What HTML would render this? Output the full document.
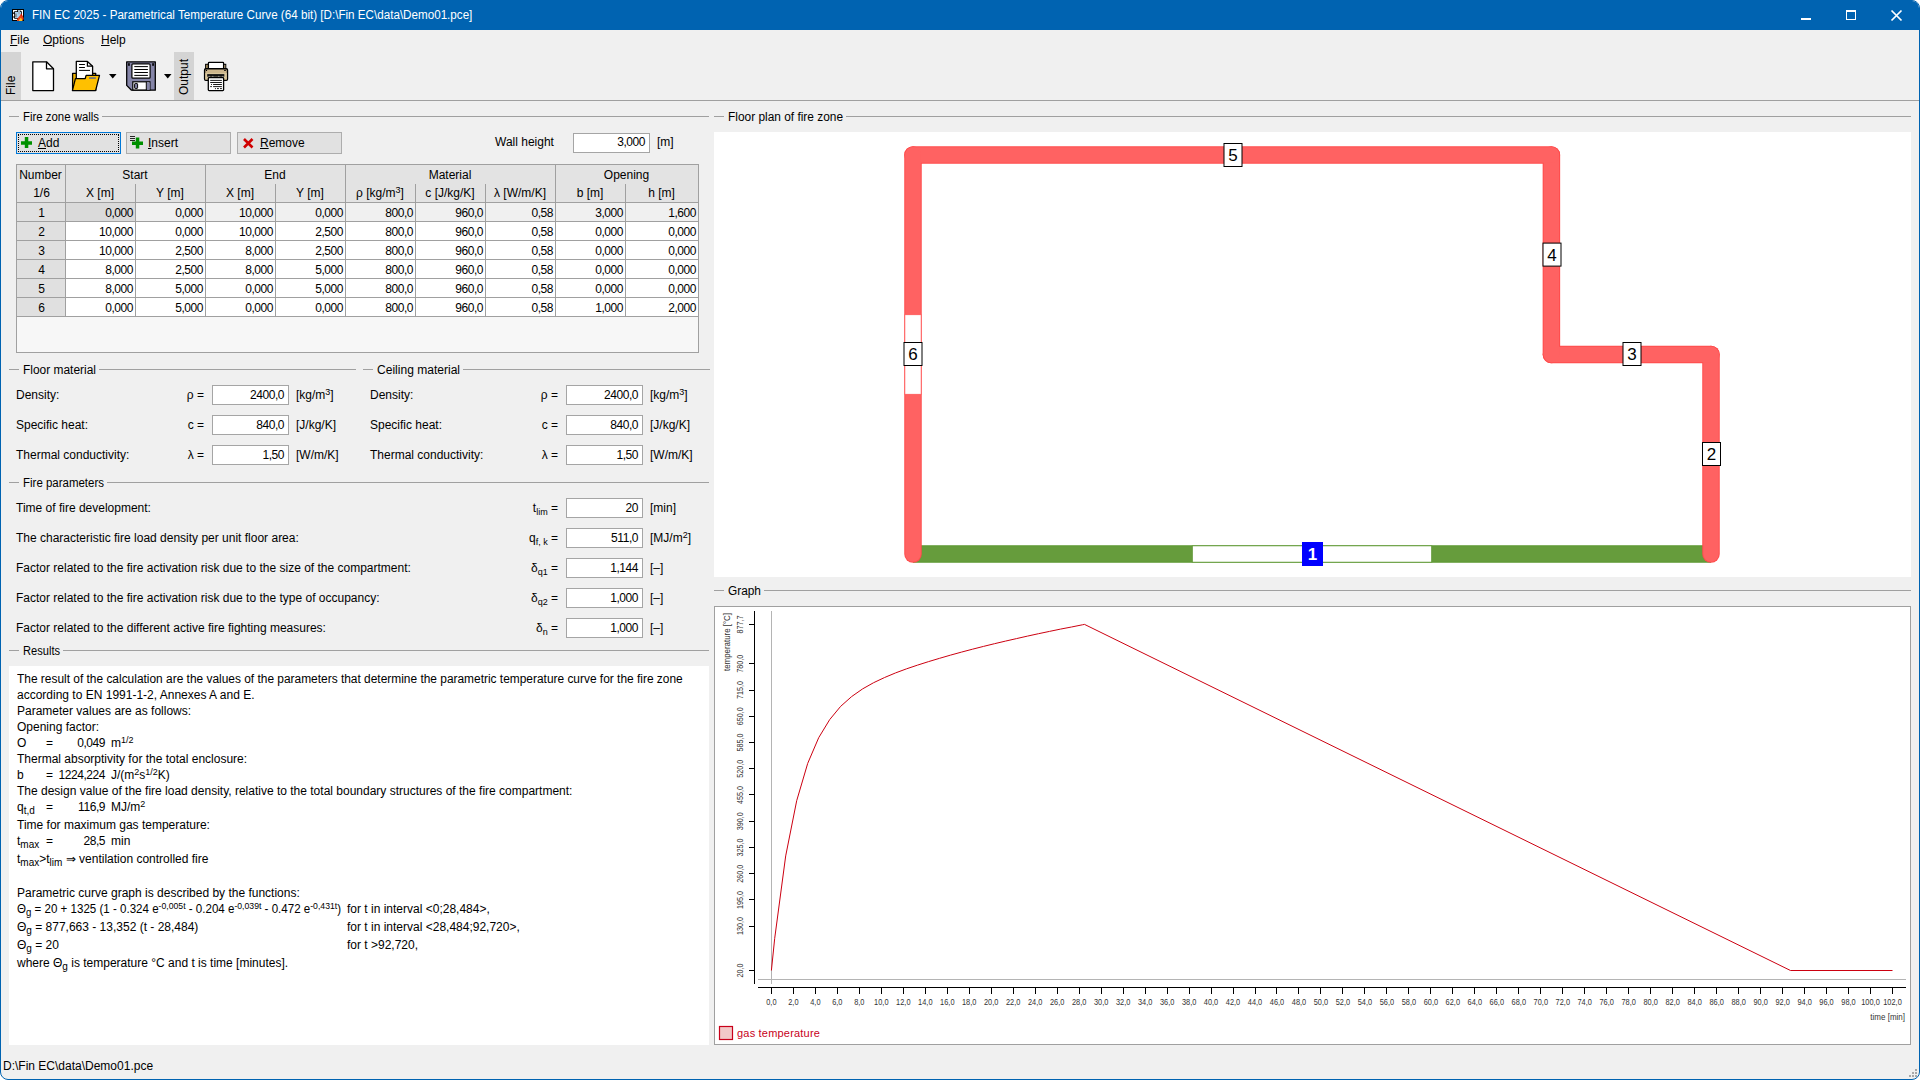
<!DOCTYPE html><html><head><meta charset="utf-8"><style>
html,body{margin:0;padding:0;width:1920px;height:1080px;overflow:hidden;background:#fff}
#win{position:absolute;left:0;top:0;width:1918px;height:1078px;border:1px solid #0063b1;border-radius:8px;background:#f0f0f0;overflow:hidden}
.t{position:absolute;font-family:"Liberation Sans",sans-serif;font-size:12px;line-height:16px;white-space:nowrap;color:#000}
.n{letter-spacing:-0.45px}
.u{text-decoration:underline}
.inp{position:absolute;background:#fff;border:1px solid #a5a5a5;box-sizing:border-box}
svg{position:absolute;overflow:visible}
</style></head><body><div id="win">
<div style="position:absolute;left:-1px;top:-1px;width:1920px;height:1080px">
<div style="position:absolute;left:0px;top:0px;width:1920px;height:30px;background:#0063b1"></div>
<svg style="left:12px;top:9px" width="12" height="12" viewBox="0 0 12 12">
<rect x="0" y="0" width="12" height="12" fill="#000"/>
<rect x="3" y="3" width="6" height="6" fill="#a9d2f2"/>
<rect x="6" y="1" width="2" height="2" fill="#a9d2f2"/>
<path d="M1.6 3.5V1.6H5.2M1.6 4.8V7.4M1.6 8.6V10.4H5.2M8.4 1.6H10.4V7" fill="none" stroke="#fff" stroke-width="1.2"/>
<rect x="3" y="4.5" width="1.8" height="3.8" fill="#8c8c8c"/>
<rect x="6.5" y="1.2" width="1" height="4" fill="#999"/>
<path d="M5 12 C4.6 10 6 8.8 7.2 7.5 C8 6.5 8.6 5.5 9 4.5 C10.2 6 11.5 7.5 11.6 9.6 C11.7 11.2 10.4 12 9.4 12Z" fill="#e8401a"/>
<path d="M7 12 C7 10.6 8 9.8 8.8 8.8 C9.8 10 10.4 10.8 10.2 12Z" fill="#ffc41a"/>
<path d="M9 4.5 C9.5 5.3 10 5.8 10.3 6.3 L9 6.8Z" fill="#c00000"/>
</svg>
<div class="t " style="left:32px;top:7px;color:#fff;transform:scaleX(0.97);transform-origin:0 0">FIN EC 2025 - Parametrical Temperature Curve (64 bit) [D:\Fin EC\data\Demo01.pce]</div>
<div style="position:absolute;left:1801px;top:18px;width:10px;height:2px;background:#fff"></div>
<div style="position:absolute;left:1846px;top:10px;width:10px;height:10px;border:1px solid #fff;border-top-width:2px;box-sizing:border-box"></div>
<svg style="left:1891px;top:10px" width="11" height="11" viewBox="0 0 11 11"><path d="M0.5 0.5L10.5 10.5M10.5 0.5L0.5 10.5" stroke="#fff" stroke-width="1.7"/></svg>
<div class="t " style="left:10px;top:32px;"><span class="u">F</span>ile</div>
<div class="t " style="left:43px;top:32px;"><span class="u">O</span>ptions</div>
<div class="t " style="left:101px;top:32px;"><span class="u">H</span>elp</div>
<div style="position:absolute;left:1px;top:52px;width:20px;height:48px;background:#d4d4d4"></div>
<div class="t" style="left:-13px;top:68px;width:48px;box-sizing:border-box;padding-left:5px;text-align:left;transform:rotate(-90deg);transform-origin:24px 8px">File</div>
<div style="position:absolute;left:174px;top:52px;width:20px;height:48px;background:#d4d4d4"></div>
<div class="t" style="left:160px;top:68px;width:48px;box-sizing:border-box;padding-left:5px;text-align:left;transform:rotate(-90deg);transform-origin:24px 8px">Output</div>
<div style="position:absolute;left:0px;top:100px;width:1920px;height:1px;background:#a0a0a0"></div>
<svg style="left:32px;top:61px" width="23" height="31" viewBox="0 0 23 31">
<path d="M0.8 0.8 H14.5 L21.5 7.8 V29.6 H0.8 Z" fill="#fff" stroke="#000" stroke-width="1.3" stroke-linejoin="round"/>
<path d="M14.5 0.8 V7.8 H21.5" fill="none" stroke="#000" stroke-width="1.3" stroke-linejoin="round"/>
</svg>
<svg style="left:68px;top:56px" width="34" height="38" viewBox="0 0 34 38">
<path d="M4.6 17.3 H27.7 V34.4 H4.6 Z" fill="#f0b400" stroke="#000" stroke-width="1.3" stroke-linejoin="round"/>
<path d="M8.3 22 V5.4 H19.4 L24.6 10.2 V22" fill="#fff" stroke="#000" stroke-width="1.3" stroke-linejoin="round"/>
<path d="M19.4 5.4 V10.2 H24.6" fill="none" stroke="#000" stroke-width="1.2"/>
<path d="M11.1 8.5H16.9M11.1 11.5H16.9M11.1 14.4H22" stroke="#000" stroke-width="1"/>
<path d="M7.4 22.6 H17.2 L18.1 19.4 H31.5 L27.6 34.6 H4.4 Z" fill="#ffc000" stroke="#000" stroke-width="1.3" stroke-linejoin="round"/>
<rect x="21.1" y="21.3" width="6.7" height="1.5" fill="#5a6890"/>
</svg>
<svg style="left:109px;top:74px" width="8" height="5" viewBox="0 0 8 5"><path d="M0 0H7.5L3.75 4.5Z" fill="#000"/></svg>
<svg style="left:122px;top:56px" width="38" height="40" viewBox="0 0 38 40">
<path d="M4.7 5.8 H33.3 V34.2 H9.5 L4.7 29.4 Z" fill="#8585a8" stroke="#000" stroke-width="1.3" stroke-linejoin="round"/>
<rect x="6.1" y="7.2" width="1.7" height="2.6" fill="#000"/><rect x="30.2" y="7.2" width="1.7" height="2.6" fill="#000"/>
<rect x="9.9" y="7.8" width="18.2" height="14.4" rx="1" fill="#fff" stroke="#000" stroke-width="1.2"/>
<path d="M12.3 10.6H25.9M12.3 13.5H25.9M12.3 16.5H25.9M12.3 19.4H25.9" stroke="#000" stroke-width="1"/>
<rect x="10.8" y="25.8" width="17.1" height="8.2" fill="#fff" stroke="#000" stroke-width="1.2"/>
<rect x="24.6" y="26.4" width="3.2" height="7.4" fill="#8585a8"/>
<path d="M24.3 25.8V34" stroke="#000" stroke-width="1"/>
<rect x="12.6" y="27.6" width="3" height="4.8" rx="0.6" fill="#8585a8" stroke="#000" stroke-width="1"/>
</svg>
<svg style="left:164px;top:74px" width="8" height="5" viewBox="0 0 8 5"><path d="M0 0H7.5L3.75 4.5Z" fill="#000"/></svg>
<svg style="left:200px;top:56px" width="32" height="40" viewBox="0 0 32 40">
<rect x="5.6" y="8.3" width="2.9" height="4.5" fill="#a89060" stroke="#000" stroke-width="1"/>
<rect x="23.6" y="8.3" width="2.2" height="4.5" fill="#d6c08f" stroke="#000" stroke-width="1"/>
<rect x="8.4" y="6.4" width="15.2" height="7" rx="0.8" fill="#fff" stroke="#000" stroke-width="1.3"/>
<rect x="4.6" y="12.7" width="22.9" height="11.6" rx="1.2" fill="#cdb68c" stroke="#000" stroke-width="1.4"/>
<rect x="5.3" y="17" width="21.5" height="6.6" fill="#d8c59b"/>
<circle cx="6.5" cy="14.4" r="0.7" fill="#000"/><path d="M24.1 14.4H25.9" stroke="#000" stroke-width="1"/>
<rect x="7.2" y="18.1" width="17.1" height="2.6" fill="#111"/>
<path d="M8.5 20.4h1.5M12 20.4h1.5M18 20.4h1.5M22 20.4h1.5" stroke="#999" stroke-width="0.8"/>
<rect x="8.3" y="21.6" width="15.3" height="13" rx="0.8" fill="#fff" stroke="#000" stroke-width="1.3"/>
<path d="M10.2 24.4H21.9M10.2 26.5H21.9M13.1 28.5H21.9M13.1 30.6H21.9M10.2 30.6H11.9M17 32.6H18.9M20 32.6H21.9" stroke="#000" stroke-width="0.9"/>
<circle cx="11.5" cy="28.5" r="0.55" fill="#000"/><circle cx="15.4" cy="32.6" r="0.55" fill="#000"/>
</svg>
<div style="position:absolute;left:9px;top:116px;width:10px;height:1px;background:#a0a0a0"></div>
<div style="position:absolute;left:102px;top:116px;width:607px;height:1px;background:#a0a0a0"></div>
<div class="t " style="left:23px;top:109px;transform:scaleX(0.950);transform-origin:0 0">Fire zone walls</div>
<div style="position:absolute;left:16px;top:132px;width:105px;height:22px;background:#e1e1e1;border:1px solid #0078d7;box-sizing:border-box"></div>
<div style="position:absolute;left:18px;top:134px;width:101px;height:18px;border:1px dotted #000;box-sizing:border-box"></div>
<svg style="left:21px;top:137px" width="12" height="12" viewBox="0 0 12 12"><path d="M0 4.2H11V7.7H0Z M3.8 0H7.3V11H3.8Z" fill="#009000"/></svg>
<div class="t " style="left:38px;top:135px;"><span class="u">A</span>dd</div>
<div style="position:absolute;left:126px;top:132px;width:105px;height:22px;background:#e1e1e1;border:1px solid #adadad;box-sizing:border-box"></div>
<svg style="left:130px;top:135px" width="15" height="15" viewBox="0 0 15 15"><path d="M0 1.5H5M0 3.5H5M0 5.5H5" stroke="#111" stroke-width="0.9"/><path d="M2 6.5H13V10H2Z M5.8 2.5H9.3V13.5H5.8Z" fill="#009000"/></svg>
<div class="t " style="left:148px;top:135px;"><span class="u">I</span>nsert</div>
<div style="position:absolute;left:237px;top:132px;width:105px;height:22px;background:#e1e1e1;border:1px solid #adadad;box-sizing:border-box"></div>
<svg style="left:243px;top:138px" width="11" height="11" viewBox="0 0 11 11"><path d="M1 1L9.5 9.5M9.5 1L1 9.5" stroke="#d00000" stroke-width="2.6"/></svg>
<div class="t " style="left:260px;top:135px;"><span class="u">R</span>emove</div>
<div class="t " style="left:495px;top:134px;">Wall height</div>
<div class="inp" style="left:573px;top:133px;width:77px;height:20px"></div>
<div class="t n" style="right:1275px;top:134px;text-align:right;">3,000</div>
<div class="t " style="left:657px;top:134px;">[m]</div>
<div style="position:absolute;left:16px;top:164px;width:683px;height:189px;background:#f7f7f7;border:1px solid #a0a0a0;box-sizing:border-box"></div>
<div style="position:absolute;left:17px;top:165px;width:681px;height:37px;background:#e3e3e3"></div>
<div style="position:absolute;left:17px;top:203px;width:48px;height:18px;background:#e0e0e0"></div>
<div style="position:absolute;left:66px;top:203px;width:69px;height:18px;background:#dadada"></div>
<div style="position:absolute;left:136px;top:203px;width:69px;height:18px;background:#f0f0f0"></div>
<div style="position:absolute;left:206px;top:203px;width:69px;height:18px;background:#f0f0f0"></div>
<div style="position:absolute;left:276px;top:203px;width:69px;height:18px;background:#f0f0f0"></div>
<div style="position:absolute;left:346px;top:203px;width:69px;height:18px;background:#f0f0f0"></div>
<div style="position:absolute;left:416px;top:203px;width:69px;height:18px;background:#f0f0f0"></div>
<div style="position:absolute;left:486px;top:203px;width:69px;height:18px;background:#f0f0f0"></div>
<div style="position:absolute;left:556px;top:203px;width:69px;height:18px;background:#f0f0f0"></div>
<div style="position:absolute;left:626px;top:203px;width:72px;height:18px;background:#f0f0f0"></div>
<div style="position:absolute;left:17px;top:222px;width:48px;height:18px;background:#e0e0e0"></div>
<div style="position:absolute;left:66px;top:222px;width:69px;height:18px;background:#fff"></div>
<div style="position:absolute;left:136px;top:222px;width:69px;height:18px;background:#fff"></div>
<div style="position:absolute;left:206px;top:222px;width:69px;height:18px;background:#fff"></div>
<div style="position:absolute;left:276px;top:222px;width:69px;height:18px;background:#fff"></div>
<div style="position:absolute;left:346px;top:222px;width:69px;height:18px;background:#fff"></div>
<div style="position:absolute;left:416px;top:222px;width:69px;height:18px;background:#fff"></div>
<div style="position:absolute;left:486px;top:222px;width:69px;height:18px;background:#fff"></div>
<div style="position:absolute;left:556px;top:222px;width:69px;height:18px;background:#fff"></div>
<div style="position:absolute;left:626px;top:222px;width:72px;height:18px;background:#fff"></div>
<div style="position:absolute;left:17px;top:241px;width:48px;height:18px;background:#e0e0e0"></div>
<div style="position:absolute;left:66px;top:241px;width:69px;height:18px;background:#fff"></div>
<div style="position:absolute;left:136px;top:241px;width:69px;height:18px;background:#fff"></div>
<div style="position:absolute;left:206px;top:241px;width:69px;height:18px;background:#fff"></div>
<div style="position:absolute;left:276px;top:241px;width:69px;height:18px;background:#fff"></div>
<div style="position:absolute;left:346px;top:241px;width:69px;height:18px;background:#fff"></div>
<div style="position:absolute;left:416px;top:241px;width:69px;height:18px;background:#fff"></div>
<div style="position:absolute;left:486px;top:241px;width:69px;height:18px;background:#fff"></div>
<div style="position:absolute;left:556px;top:241px;width:69px;height:18px;background:#fff"></div>
<div style="position:absolute;left:626px;top:241px;width:72px;height:18px;background:#fff"></div>
<div style="position:absolute;left:17px;top:260px;width:48px;height:18px;background:#e0e0e0"></div>
<div style="position:absolute;left:66px;top:260px;width:69px;height:18px;background:#fff"></div>
<div style="position:absolute;left:136px;top:260px;width:69px;height:18px;background:#fff"></div>
<div style="position:absolute;left:206px;top:260px;width:69px;height:18px;background:#fff"></div>
<div style="position:absolute;left:276px;top:260px;width:69px;height:18px;background:#fff"></div>
<div style="position:absolute;left:346px;top:260px;width:69px;height:18px;background:#fff"></div>
<div style="position:absolute;left:416px;top:260px;width:69px;height:18px;background:#fff"></div>
<div style="position:absolute;left:486px;top:260px;width:69px;height:18px;background:#fff"></div>
<div style="position:absolute;left:556px;top:260px;width:69px;height:18px;background:#fff"></div>
<div style="position:absolute;left:626px;top:260px;width:72px;height:18px;background:#fff"></div>
<div style="position:absolute;left:17px;top:279px;width:48px;height:18px;background:#e0e0e0"></div>
<div style="position:absolute;left:66px;top:279px;width:69px;height:18px;background:#fff"></div>
<div style="position:absolute;left:136px;top:279px;width:69px;height:18px;background:#fff"></div>
<div style="position:absolute;left:206px;top:279px;width:69px;height:18px;background:#fff"></div>
<div style="position:absolute;left:276px;top:279px;width:69px;height:18px;background:#fff"></div>
<div style="position:absolute;left:346px;top:279px;width:69px;height:18px;background:#fff"></div>
<div style="position:absolute;left:416px;top:279px;width:69px;height:18px;background:#fff"></div>
<div style="position:absolute;left:486px;top:279px;width:69px;height:18px;background:#fff"></div>
<div style="position:absolute;left:556px;top:279px;width:69px;height:18px;background:#fff"></div>
<div style="position:absolute;left:626px;top:279px;width:72px;height:18px;background:#fff"></div>
<div style="position:absolute;left:17px;top:298px;width:48px;height:18px;background:#e0e0e0"></div>
<div style="position:absolute;left:66px;top:298px;width:69px;height:18px;background:#fff"></div>
<div style="position:absolute;left:136px;top:298px;width:69px;height:18px;background:#fff"></div>
<div style="position:absolute;left:206px;top:298px;width:69px;height:18px;background:#fff"></div>
<div style="position:absolute;left:276px;top:298px;width:69px;height:18px;background:#fff"></div>
<div style="position:absolute;left:346px;top:298px;width:69px;height:18px;background:#fff"></div>
<div style="position:absolute;left:416px;top:298px;width:69px;height:18px;background:#fff"></div>
<div style="position:absolute;left:486px;top:298px;width:69px;height:18px;background:#fff"></div>
<div style="position:absolute;left:556px;top:298px;width:69px;height:18px;background:#fff"></div>
<div style="position:absolute;left:626px;top:298px;width:72px;height:18px;background:#fff"></div>
<div style="position:absolute;left:65px;top:165px;width:1px;height:151px;background:#a0a0a0"></div>
<div style="position:absolute;left:135px;top:184px;width:1px;height:132px;background:#a0a0a0"></div>
<div style="position:absolute;left:205px;top:165px;width:1px;height:151px;background:#a0a0a0"></div>
<div style="position:absolute;left:275px;top:184px;width:1px;height:132px;background:#a0a0a0"></div>
<div style="position:absolute;left:345px;top:165px;width:1px;height:151px;background:#a0a0a0"></div>
<div style="position:absolute;left:415px;top:184px;width:1px;height:132px;background:#a0a0a0"></div>
<div style="position:absolute;left:485px;top:184px;width:1px;height:132px;background:#a0a0a0"></div>
<div style="position:absolute;left:555px;top:165px;width:1px;height:151px;background:#a0a0a0"></div>
<div style="position:absolute;left:625px;top:184px;width:1px;height:132px;background:#a0a0a0"></div>
<div style="position:absolute;left:17px;top:202px;width:681px;height:1px;background:#a0a0a0"></div>
<div style="position:absolute;left:17px;top:221px;width:681px;height:1px;background:#a0a0a0"></div>
<div style="position:absolute;left:17px;top:240px;width:681px;height:1px;background:#a0a0a0"></div>
<div style="position:absolute;left:17px;top:259px;width:681px;height:1px;background:#a0a0a0"></div>
<div style="position:absolute;left:17px;top:278px;width:681px;height:1px;background:#a0a0a0"></div>
<div style="position:absolute;left:17px;top:297px;width:681px;height:1px;background:#a0a0a0"></div>
<div style="position:absolute;left:17px;top:316px;width:681px;height:1px;background:#a0a0a0"></div>
<div class="t" style="left:16px;width:49px;top:167px;text-align:center">Number</div>
<div class="t" style="left:17px;width:49px;top:185px;text-align:center">1/6</div>
<div class="t" style="left:65px;width:140px;top:167px;text-align:center">Start</div>
<div class="t" style="left:205px;width:140px;top:167px;text-align:center">End</div>
<div class="t" style="left:345px;width:210px;top:167px;text-align:center">Material</div>
<div class="t" style="left:555px;width:143px;top:167px;text-align:center">Opening</div>
<div class="t" style="left:65px;width:70px;top:185px;text-align:center">X [m]</div>
<div class="t" style="left:135px;width:70px;top:185px;text-align:center">Y [m]</div>
<div class="t" style="left:205px;width:70px;top:185px;text-align:center">X [m]</div>
<div class="t" style="left:275px;width:70px;top:185px;text-align:center">Y [m]</div>
<div class="t" style="left:345px;width:70px;top:185px;text-align:center">ρ [kg/m<sup style="font-size:9px;vertical-align:4px;line-height:0">3</sup>]</div>
<div class="t" style="left:415px;width:70px;top:185px;text-align:center">c [J/kg/K]</div>
<div class="t" style="left:485px;width:70px;top:185px;text-align:center">λ [W/m/K]</div>
<div class="t" style="left:555px;width:70px;top:185px;text-align:center">b [m]</div>
<div class="t" style="left:625px;width:73px;top:185px;text-align:center">h [m]</div>
<div class="t" style="left:17px;width:49px;top:205px;text-align:center">1</div>
<div class="t n" style="right:1787px;top:205px;text-align:right;">0,000</div>
<div class="t n" style="right:1717px;top:205px;text-align:right;">0,000</div>
<div class="t n" style="right:1647px;top:205px;text-align:right;">10,000</div>
<div class="t n" style="right:1577px;top:205px;text-align:right;">0,000</div>
<div class="t n" style="right:1507px;top:205px;text-align:right;">800,0</div>
<div class="t n" style="right:1437px;top:205px;text-align:right;">960,0</div>
<div class="t n" style="right:1367px;top:205px;text-align:right;">0,58</div>
<div class="t n" style="right:1297px;top:205px;text-align:right;">3,000</div>
<div class="t n" style="right:1224px;top:205px;text-align:right;">1,600</div>
<div class="t" style="left:17px;width:49px;top:224px;text-align:center">2</div>
<div class="t n" style="right:1787px;top:224px;text-align:right;">10,000</div>
<div class="t n" style="right:1717px;top:224px;text-align:right;">0,000</div>
<div class="t n" style="right:1647px;top:224px;text-align:right;">10,000</div>
<div class="t n" style="right:1577px;top:224px;text-align:right;">2,500</div>
<div class="t n" style="right:1507px;top:224px;text-align:right;">800,0</div>
<div class="t n" style="right:1437px;top:224px;text-align:right;">960,0</div>
<div class="t n" style="right:1367px;top:224px;text-align:right;">0,58</div>
<div class="t n" style="right:1297px;top:224px;text-align:right;">0,000</div>
<div class="t n" style="right:1224px;top:224px;text-align:right;">0,000</div>
<div class="t" style="left:17px;width:49px;top:243px;text-align:center">3</div>
<div class="t n" style="right:1787px;top:243px;text-align:right;">10,000</div>
<div class="t n" style="right:1717px;top:243px;text-align:right;">2,500</div>
<div class="t n" style="right:1647px;top:243px;text-align:right;">8,000</div>
<div class="t n" style="right:1577px;top:243px;text-align:right;">2,500</div>
<div class="t n" style="right:1507px;top:243px;text-align:right;">800,0</div>
<div class="t n" style="right:1437px;top:243px;text-align:right;">960,0</div>
<div class="t n" style="right:1367px;top:243px;text-align:right;">0,58</div>
<div class="t n" style="right:1297px;top:243px;text-align:right;">0,000</div>
<div class="t n" style="right:1224px;top:243px;text-align:right;">0,000</div>
<div class="t" style="left:17px;width:49px;top:262px;text-align:center">4</div>
<div class="t n" style="right:1787px;top:262px;text-align:right;">8,000</div>
<div class="t n" style="right:1717px;top:262px;text-align:right;">2,500</div>
<div class="t n" style="right:1647px;top:262px;text-align:right;">8,000</div>
<div class="t n" style="right:1577px;top:262px;text-align:right;">5,000</div>
<div class="t n" style="right:1507px;top:262px;text-align:right;">800,0</div>
<div class="t n" style="right:1437px;top:262px;text-align:right;">960,0</div>
<div class="t n" style="right:1367px;top:262px;text-align:right;">0,58</div>
<div class="t n" style="right:1297px;top:262px;text-align:right;">0,000</div>
<div class="t n" style="right:1224px;top:262px;text-align:right;">0,000</div>
<div class="t" style="left:17px;width:49px;top:281px;text-align:center">5</div>
<div class="t n" style="right:1787px;top:281px;text-align:right;">8,000</div>
<div class="t n" style="right:1717px;top:281px;text-align:right;">5,000</div>
<div class="t n" style="right:1647px;top:281px;text-align:right;">0,000</div>
<div class="t n" style="right:1577px;top:281px;text-align:right;">5,000</div>
<div class="t n" style="right:1507px;top:281px;text-align:right;">800,0</div>
<div class="t n" style="right:1437px;top:281px;text-align:right;">960,0</div>
<div class="t n" style="right:1367px;top:281px;text-align:right;">0,58</div>
<div class="t n" style="right:1297px;top:281px;text-align:right;">0,000</div>
<div class="t n" style="right:1224px;top:281px;text-align:right;">0,000</div>
<div class="t" style="left:17px;width:49px;top:300px;text-align:center">6</div>
<div class="t n" style="right:1787px;top:300px;text-align:right;">0,000</div>
<div class="t n" style="right:1717px;top:300px;text-align:right;">5,000</div>
<div class="t n" style="right:1647px;top:300px;text-align:right;">0,000</div>
<div class="t n" style="right:1577px;top:300px;text-align:right;">0,000</div>
<div class="t n" style="right:1507px;top:300px;text-align:right;">800,0</div>
<div class="t n" style="right:1437px;top:300px;text-align:right;">960,0</div>
<div class="t n" style="right:1367px;top:300px;text-align:right;">0,58</div>
<div class="t n" style="right:1297px;top:300px;text-align:right;">1,000</div>
<div class="t n" style="right:1224px;top:300px;text-align:right;">2,000</div>
<div style="position:absolute;left:9px;top:369px;width:10px;height:1px;background:#a0a0a0"></div>
<div style="position:absolute;left:99px;top:369px;width:257px;height:1px;background:#a0a0a0"></div>
<div class="t " style="left:23px;top:362px;transform:scaleX(0.995);transform-origin:0 0">Floor material</div>
<div style="position:absolute;left:363px;top:369px;width:10px;height:1px;background:#a0a0a0"></div>
<div style="position:absolute;left:463px;top:369px;width:247px;height:1px;background:#a0a0a0"></div>
<div class="t " style="left:377px;top:362px;transform:scaleX(1.004);transform-origin:0 0">Ceiling material</div>
<div class="t " style="left:16px;top:387px;">Density:</div>
<div class="t " style="right:1716px;top:387px;text-align:right;">ρ =</div>
<div class="inp" style="left:212px;top:385px;width:77px;height:20px"></div>
<div class="t n" style="right:1636px;top:387px;text-align:right;">2400,0</div>
<div class="t " style="left:296px;top:387px;">[kg/m<sup style="font-size:9px;vertical-align:4px;line-height:0">3</sup>]</div>
<div class="t " style="left:370px;top:387px;">Density:</div>
<div class="t " style="right:1362px;top:387px;text-align:right;">ρ =</div>
<div class="inp" style="left:566px;top:385px;width:77px;height:20px"></div>
<div class="t n" style="right:1282px;top:387px;text-align:right;">2400,0</div>
<div class="t " style="left:650px;top:387px;">[kg/m<sup style="font-size:9px;vertical-align:4px;line-height:0">3</sup>]</div>
<div class="t " style="left:16px;top:417px;">Specific heat:</div>
<div class="t " style="right:1716px;top:417px;text-align:right;">c =</div>
<div class="inp" style="left:212px;top:415px;width:77px;height:20px"></div>
<div class="t n" style="right:1636px;top:417px;text-align:right;">840,0</div>
<div class="t " style="left:296px;top:417px;">[J/kg/K]</div>
<div class="t " style="left:370px;top:417px;">Specific heat:</div>
<div class="t " style="right:1362px;top:417px;text-align:right;">c =</div>
<div class="inp" style="left:566px;top:415px;width:77px;height:20px"></div>
<div class="t n" style="right:1282px;top:417px;text-align:right;">840,0</div>
<div class="t " style="left:650px;top:417px;">[J/kg/K]</div>
<div class="t " style="left:16px;top:447px;">Thermal conductivity:</div>
<div class="t " style="right:1716px;top:447px;text-align:right;">λ =</div>
<div class="inp" style="left:212px;top:445px;width:77px;height:20px"></div>
<div class="t n" style="right:1636px;top:447px;text-align:right;">1,50</div>
<div class="t " style="left:296px;top:447px;">[W/m/K]</div>
<div class="t " style="left:370px;top:447px;">Thermal conductivity:</div>
<div class="t " style="right:1362px;top:447px;text-align:right;">λ =</div>
<div class="inp" style="left:566px;top:445px;width:77px;height:20px"></div>
<div class="t n" style="right:1282px;top:447px;text-align:right;">1,50</div>
<div class="t " style="left:650px;top:447px;">[W/m/K]</div>
<div style="position:absolute;left:9px;top:482px;width:10px;height:1px;background:#a0a0a0"></div>
<div style="position:absolute;left:107px;top:482px;width:602px;height:1px;background:#a0a0a0"></div>
<div class="t " style="left:23px;top:475px;transform:scaleX(0.956);transform-origin:0 0">Fire parameters</div>
<div class="t " style="left:16px;top:500px;">Time of fire development:</div>
<div class="t " style="right:1362px;top:500px;text-align:right;">t<sub style="font-size:9px;vertical-align:-3px;line-height:0">lim</sub> =</div>
<div class="inp" style="left:566px;top:498px;width:77px;height:20px"></div>
<div class="t n" style="right:1282px;top:500px;text-align:right;">20</div>
<div class="t " style="left:650px;top:500px;">[min]</div>
<div class="t " style="left:16px;top:530px;">The characteristic fire load density per unit floor area:</div>
<div class="t " style="right:1362px;top:530px;text-align:right;">q<sub style="font-size:9px;vertical-align:-3px;line-height:0">f, k</sub> =</div>
<div class="inp" style="left:566px;top:528px;width:77px;height:20px"></div>
<div class="t n" style="right:1282px;top:530px;text-align:right;">511,0</div>
<div class="t " style="left:650px;top:530px;">[MJ/m<sup style="font-size:9px;vertical-align:4px;line-height:0">2</sup>]</div>
<div class="t " style="left:16px;top:560px;">Factor related to the fire activation risk due to the size of the compartment:</div>
<div class="t " style="right:1362px;top:560px;text-align:right;">δ<sub style="font-size:9px;vertical-align:-3px;line-height:0">q1</sub> =</div>
<div class="inp" style="left:566px;top:558px;width:77px;height:20px"></div>
<div class="t n" style="right:1282px;top:560px;text-align:right;">1,144</div>
<div class="t " style="left:650px;top:560px;">[–]</div>
<div class="t " style="left:16px;top:590px;">Factor related to the fire activation risk due to the type of occupancy:</div>
<div class="t " style="right:1362px;top:590px;text-align:right;">δ<sub style="font-size:9px;vertical-align:-3px;line-height:0">q2</sub> =</div>
<div class="inp" style="left:566px;top:588px;width:77px;height:20px"></div>
<div class="t n" style="right:1282px;top:590px;text-align:right;">1,000</div>
<div class="t " style="left:650px;top:590px;">[–]</div>
<div class="t " style="left:16px;top:620px;">Factor related to the different active fire fighting measures:</div>
<div class="t " style="right:1362px;top:620px;text-align:right;">δ<sub style="font-size:9px;vertical-align:-3px;line-height:0">n</sub> =</div>
<div class="inp" style="left:566px;top:618px;width:77px;height:20px"></div>
<div class="t n" style="right:1282px;top:620px;text-align:right;">1,000</div>
<div class="t " style="left:650px;top:620px;">[–]</div>
<div style="position:absolute;left:9px;top:650px;width:10px;height:1px;background:#a0a0a0"></div>
<div style="position:absolute;left:63px;top:650px;width:646px;height:1px;background:#a0a0a0"></div>
<div class="t " style="left:23px;top:643px;transform:scaleX(0.925);transform-origin:0 0">Results</div>
<div style="position:absolute;left:9px;top:666px;width:700px;height:379px;background:#fff"></div>
<div class="t " style="left:17px;top:671px;transform:scaleX(0.993);transform-origin:0 0">The result of the calculation are the values of the parameters that determine the parametric temperature curve for the fire zone</div>
<div class="t " style="left:17px;top:687px;">according to EN 1991-1-2, Annexes A and E.</div>
<div class="t " style="left:17px;top:703px;">Parameter values are as follows:</div>
<div class="t " style="left:17px;top:719px;">Opening factor:</div>
<div class="t " style="left:17px;top:751px;">Thermal absorptivity for the total enclosure:</div>
<div class="t " style="left:17px;top:783px;">The design value of the fire load density, relative to the total boundary structures of the fire compartment:</div>
<div class="t " style="left:17px;top:817px;">Time for maximum gas temperature:</div>
<div class="t " style="left:17px;top:851px;">t<sub style="font-size:10px;vertical-align:-3px;line-height:0">max</sub>&gt;t<sub style="font-size:10px;vertical-align:-3px;line-height:0">lim</sub> ⇒ ventilation controlled fire</div>
<div class="t " style="left:17px;top:885px;">Parametric curve graph is described by the functions:</div>
<div class="t " style="left:17px;top:901px;transform:scaleX(0.963);transform-origin:0 0">Θ<sub style="font-size:10px;vertical-align:-3px;line-height:0">g</sub> = 20 + 1325 (1 - 0.324 e<sup style="font-size:9px;vertical-align:4px;line-height:0">-0,005t</sup> - 0.204 e<sup style="font-size:9px;vertical-align:4px;line-height:0">-0,039t</sup> - 0.472 e<sup style="font-size:9px;vertical-align:4px;line-height:0">-0,431t</sup>)</div>
<div class="t " style="left:17px;top:919px;">Θ<sub style="font-size:10px;vertical-align:-3px;line-height:0">g</sub> = 877,663 - 13,352 (t - 28,484)</div>
<div class="t " style="left:17px;top:937px;">Θ<sub style="font-size:10px;vertical-align:-3px;line-height:0">g</sub> = 20</div>
<div class="t " style="left:17px;top:955px;">where Θ<sub style="font-size:10px;vertical-align:-3px;line-height:0">g</sub> is temperature °C and t is time [minutes].</div>
<div class="t " style="left:347px;top:901px;">for t in interval &lt;0;28,484&gt;,</div>
<div class="t " style="left:347px;top:919px;">for t in interval &lt;28,484;92,720&gt;,</div>
<div class="t " style="left:347px;top:937px;">for t &gt;92,720,</div>
<div class="t " style="left:17px;top:735px;">O</div>
<div class="t " style="left:46px;top:735px;">=</div>
<div class="t n" style="right:1815px;top:735px;text-align:right;">0,049</div>
<div class="t " style="left:111px;top:735px;">m<sup style="font-size:9px;vertical-align:4px;line-height:0">1/2</sup></div>
<div class="t " style="left:17px;top:767px;">b</div>
<div class="t " style="left:46px;top:767px;">=</div>
<div class="t n" style="right:1815px;top:767px;text-align:right;">1224,224</div>
<div class="t " style="left:111px;top:767px;">J/(m<sup style="font-size:9px;vertical-align:4px;line-height:0">2</sup>s<sup style="font-size:9px;vertical-align:4px;line-height:0">1/2</sup>K)</div>
<div class="t " style="left:17px;top:799px;">q<sub style="font-size:10px;vertical-align:-3px;line-height:0">t,d</sub></div>
<div class="t " style="left:46px;top:799px;">=</div>
<div class="t n" style="right:1815px;top:799px;text-align:right;">116,9</div>
<div class="t " style="left:111px;top:799px;">MJ/m<sup style="font-size:9px;vertical-align:4px;line-height:0">2</sup></div>
<div class="t " style="left:17px;top:833px;">t<sub style="font-size:10px;vertical-align:-3px;line-height:0">max</sub></div>
<div class="t " style="left:46px;top:833px;">=</div>
<div class="t n" style="right:1815px;top:833px;text-align:right;">28,5</div>
<div class="t " style="left:111px;top:833px;">min</div>
<div style="position:absolute;left:1915px;top:1069px;width:2px;height:2px;background:#a8a8a8"></div>
<div style="position:absolute;left:1912px;top:1072px;width:2px;height:2px;background:#a8a8a8"></div>
<div style="position:absolute;left:1915px;top:1072px;width:2px;height:2px;background:#a8a8a8"></div>
<div style="position:absolute;left:1909px;top:1075px;width:2px;height:2px;background:#a8a8a8"></div>
<div style="position:absolute;left:1912px;top:1075px;width:2px;height:2px;background:#a8a8a8"></div>
<div style="position:absolute;left:1915px;top:1075px;width:2px;height:2px;background:#a8a8a8"></div>
<div class="t " style="left:3px;top:1058px;">D:\Fin EC\data\Demo01.pce</div>
<div style="position:absolute;left:714px;top:116px;width:10px;height:1px;background:#a0a0a0"></div>
<div style="position:absolute;left:846px;top:116px;width:1065px;height:1px;background:#a0a0a0"></div>
<div class="t " style="left:728px;top:109px;transform:scaleX(0.991);transform-origin:0 0">Floor plan of fire zone</div>
<div style="position:absolute;left:714px;top:132px;width:1197px;height:445px;background:#fff"></div>
<svg style="left:0;top:0" width="1920" height="1080" viewBox="0 0 1920 1080"><line x1="913.0" y1="554.0" x2="1711.0" y2="554.0" stroke="#5a962e" stroke-width="17.5"/><line x1="913.0" y1="554.0" x2="1711.0" y2="554.0" stroke="#669c3c" stroke-width="15.5"/><rect x="1192.3" y="545.75" width="239.39999999999986" height="16.5" fill="#fff" stroke="#669c3c" stroke-width="1"/><line x1="1711.0" y1="554.0" x2="1711.0" y2="354.5" stroke="#ff4c4c" stroke-width="17.5" stroke-linecap="round"/><line x1="1711.0" y1="354.5" x2="1551.4" y2="354.5" stroke="#ff4c4c" stroke-width="17.5" stroke-linecap="round"/><line x1="1551.4" y1="354.5" x2="1551.4" y2="155.0" stroke="#ff4c4c" stroke-width="17.5" stroke-linecap="round"/><line x1="1551.4" y1="155.0" x2="913.0" y2="155.0" stroke="#ff4c4c" stroke-width="17.5" stroke-linecap="round"/><line x1="913.0" y1="155.0" x2="913.0" y2="554.0" stroke="#ff4c4c" stroke-width="17.5" stroke-linecap="round"/><line x1="1711.0" y1="554.0" x2="1711.0" y2="354.5" stroke="#ff6262" stroke-width="15.5" stroke-linecap="round"/><line x1="1711.0" y1="354.5" x2="1551.4" y2="354.5" stroke="#ff6262" stroke-width="15.5" stroke-linecap="round"/><line x1="1551.4" y1="354.5" x2="1551.4" y2="155.0" stroke="#ff6262" stroke-width="15.5" stroke-linecap="round"/><line x1="1551.4" y1="155.0" x2="913.0" y2="155.0" stroke="#ff6262" stroke-width="15.5" stroke-linecap="round"/><line x1="913.0" y1="155.0" x2="913.0" y2="554.0" stroke="#ff6262" stroke-width="15.5" stroke-linecap="round"/><rect x="904.75" y="314.6" width="16.5" height="79.79999999999995" fill="#fff" stroke="#ff6262" stroke-width="1"/><rect x="1302.0" y="542.0" width="21" height="24" fill="#0000ff"/><text x="1312.5" y="560" text-anchor="middle" font-family="Liberation Sans" font-size="17" font-weight="bold" fill="#fff">1</text><rect x="1702.5" y="442.5" width="18" height="23" fill="#fff" stroke="#000" stroke-width="1"/><text x="1711.5" y="460" text-anchor="middle" font-family="Liberation Sans" font-size="17" fill="#000">2</text><rect x="1623.0" y="342.5" width="18" height="23" fill="#fff" stroke="#000" stroke-width="1"/><text x="1632" y="360" text-anchor="middle" font-family="Liberation Sans" font-size="17" fill="#000">3</text><rect x="1543.0" y="243.1" width="18" height="23" fill="#fff" stroke="#000" stroke-width="1"/><text x="1552" y="260.6" text-anchor="middle" font-family="Liberation Sans" font-size="17" fill="#000">4</text><rect x="1224.0" y="143.5" width="18" height="23" fill="#fff" stroke="#000" stroke-width="1"/><text x="1233" y="161" text-anchor="middle" font-family="Liberation Sans" font-size="17" fill="#000">5</text><rect x="904.0" y="342.5" width="18" height="23" fill="#fff" stroke="#000" stroke-width="1"/><text x="913" y="360" text-anchor="middle" font-family="Liberation Sans" font-size="17" fill="#000">6</text></svg>
<div style="position:absolute;left:714px;top:590px;width:10px;height:1px;background:#a0a0a0"></div>
<div style="position:absolute;left:764px;top:590px;width:1147px;height:1px;background:#a0a0a0"></div>
<div class="t " style="left:728px;top:583px;transform:scaleX(0.988);transform-origin:0 0">Graph</div>
<div style="position:absolute;left:714px;top:606px;width:1197px;height:439px;background:#fff;border:1px solid #a0a0a0;box-sizing:border-box"></div>
<svg style="left:0;top:0" width="1920" height="1080" viewBox="0 0 1920 1080"><path d="M754.5 611V984" stroke="#000" stroke-width="1"/><path d="M758 987.5H1906" stroke="#000" stroke-width="1"/><path d="M771.5 611V984M758 979.5H1906" stroke="#b4b4b4" stroke-width="1"/><path d="M749 624.5H754.5" stroke="#000" stroke-width="1"/><text transform="translate(743.2 624.4) rotate(-90) scale(0.83 1)" text-anchor="middle" font-family="Liberation Sans" font-size="8.7" fill="#333">877,7</text><path d="M749 663.5H754.5" stroke="#000" stroke-width="1"/><text transform="translate(743.2 663.8) rotate(-90) scale(0.83 1)" text-anchor="middle" font-family="Liberation Sans" font-size="8.7" fill="#333">780,0</text><path d="M749 690.5H754.5" stroke="#000" stroke-width="1"/><text transform="translate(743.2 690.1) rotate(-90) scale(0.83 1)" text-anchor="middle" font-family="Liberation Sans" font-size="8.7" fill="#333">715,0</text><path d="M749 716.5H754.5" stroke="#000" stroke-width="1"/><text transform="translate(743.2 716.3) rotate(-90) scale(0.83 1)" text-anchor="middle" font-family="Liberation Sans" font-size="8.7" fill="#333">650,0</text><path d="M749 742.5H754.5" stroke="#000" stroke-width="1"/><text transform="translate(743.2 742.5) rotate(-90) scale(0.83 1)" text-anchor="middle" font-family="Liberation Sans" font-size="8.7" fill="#333">585,0</text><path d="M749 768.5H754.5" stroke="#000" stroke-width="1"/><text transform="translate(743.2 768.8) rotate(-90) scale(0.83 1)" text-anchor="middle" font-family="Liberation Sans" font-size="8.7" fill="#333">520,0</text><path d="M749 794.5H754.5" stroke="#000" stroke-width="1"/><text transform="translate(743.2 795.0) rotate(-90) scale(0.83 1)" text-anchor="middle" font-family="Liberation Sans" font-size="8.7" fill="#333">455,0</text><path d="M749 821.5H754.5" stroke="#000" stroke-width="1"/><text transform="translate(743.2 821.2) rotate(-90) scale(0.83 1)" text-anchor="middle" font-family="Liberation Sans" font-size="8.7" fill="#333">390,0</text><path d="M749 847.5H754.5" stroke="#000" stroke-width="1"/><text transform="translate(743.2 847.4) rotate(-90) scale(0.83 1)" text-anchor="middle" font-family="Liberation Sans" font-size="8.7" fill="#333">325,0</text><path d="M749 873.5H754.5" stroke="#000" stroke-width="1"/><text transform="translate(743.2 873.7) rotate(-90) scale(0.83 1)" text-anchor="middle" font-family="Liberation Sans" font-size="8.7" fill="#333">260,0</text><path d="M749 899.5H754.5" stroke="#000" stroke-width="1"/><text transform="translate(743.2 899.9) rotate(-90) scale(0.83 1)" text-anchor="middle" font-family="Liberation Sans" font-size="8.7" fill="#333">195,0</text><path d="M749 926.5H754.5" stroke="#000" stroke-width="1"/><text transform="translate(743.2 926.1) rotate(-90) scale(0.83 1)" text-anchor="middle" font-family="Liberation Sans" font-size="8.7" fill="#333">130,0</text><path d="M749 970.5H754.5" stroke="#000" stroke-width="1"/><text transform="translate(743.2 970.5) rotate(-90) scale(0.83 1)" text-anchor="middle" font-family="Liberation Sans" font-size="8.7" fill="#333">20,0</text><text transform="translate(729.5 642) rotate(-90) scale(0.91 1)" text-anchor="middle" font-family="Liberation Sans" font-size="8.7" fill="#333">temperature [°C]</text><path d="M771.5 988V994" stroke="#000" stroke-width="1"/><text transform="translate(771.4 1005) scale(0.85 1)" text-anchor="middle" font-family="Liberation Sans" font-size="8.7" fill="#333">0,0</text><path d="M793.5 988V994" stroke="#000" stroke-width="1"/><text transform="translate(793.4 1005) scale(0.85 1)" text-anchor="middle" font-family="Liberation Sans" font-size="8.7" fill="#333">2,0</text><path d="M815.5 988V994" stroke="#000" stroke-width="1"/><text transform="translate(815.4 1005) scale(0.85 1)" text-anchor="middle" font-family="Liberation Sans" font-size="8.7" fill="#333">4,0</text><path d="M837.5 988V994" stroke="#000" stroke-width="1"/><text transform="translate(837.3 1005) scale(0.85 1)" text-anchor="middle" font-family="Liberation Sans" font-size="8.7" fill="#333">6,0</text><path d="M859.5 988V994" stroke="#000" stroke-width="1"/><text transform="translate(859.3 1005) scale(0.85 1)" text-anchor="middle" font-family="Liberation Sans" font-size="8.7" fill="#333">8,0</text><path d="M881.5 988V994" stroke="#000" stroke-width="1"/><text transform="translate(881.3 1005) scale(0.85 1)" text-anchor="middle" font-family="Liberation Sans" font-size="8.7" fill="#333">10,0</text><path d="M903.5 988V994" stroke="#000" stroke-width="1"/><text transform="translate(903.3 1005) scale(0.85 1)" text-anchor="middle" font-family="Liberation Sans" font-size="8.7" fill="#333">12,0</text><path d="M925.5 988V994" stroke="#000" stroke-width="1"/><text transform="translate(925.3 1005) scale(0.85 1)" text-anchor="middle" font-family="Liberation Sans" font-size="8.7" fill="#333">14,0</text><path d="M947.5 988V994" stroke="#000" stroke-width="1"/><text transform="translate(947.3 1005) scale(0.85 1)" text-anchor="middle" font-family="Liberation Sans" font-size="8.7" fill="#333">16,0</text><path d="M969.5 988V994" stroke="#000" stroke-width="1"/><text transform="translate(969.2 1005) scale(0.85 1)" text-anchor="middle" font-family="Liberation Sans" font-size="8.7" fill="#333">18,0</text><path d="M991.5 988V994" stroke="#000" stroke-width="1"/><text transform="translate(991.2 1005) scale(0.85 1)" text-anchor="middle" font-family="Liberation Sans" font-size="8.7" fill="#333">20,0</text><path d="M1013.5 988V994" stroke="#000" stroke-width="1"/><text transform="translate(1013.2 1005) scale(0.85 1)" text-anchor="middle" font-family="Liberation Sans" font-size="8.7" fill="#333">22,0</text><path d="M1035.5 988V994" stroke="#000" stroke-width="1"/><text transform="translate(1035.2 1005) scale(0.85 1)" text-anchor="middle" font-family="Liberation Sans" font-size="8.7" fill="#333">24,0</text><path d="M1057.5 988V994" stroke="#000" stroke-width="1"/><text transform="translate(1057.2 1005) scale(0.85 1)" text-anchor="middle" font-family="Liberation Sans" font-size="8.7" fill="#333">26,0</text><path d="M1079.5 988V994" stroke="#000" stroke-width="1"/><text transform="translate(1079.1 1005) scale(0.85 1)" text-anchor="middle" font-family="Liberation Sans" font-size="8.7" fill="#333">28,0</text><path d="M1101.5 988V994" stroke="#000" stroke-width="1"/><text transform="translate(1101.1 1005) scale(0.85 1)" text-anchor="middle" font-family="Liberation Sans" font-size="8.7" fill="#333">30,0</text><path d="M1123.5 988V994" stroke="#000" stroke-width="1"/><text transform="translate(1123.1 1005) scale(0.85 1)" text-anchor="middle" font-family="Liberation Sans" font-size="8.7" fill="#333">32,0</text><path d="M1145.5 988V994" stroke="#000" stroke-width="1"/><text transform="translate(1145.1 1005) scale(0.85 1)" text-anchor="middle" font-family="Liberation Sans" font-size="8.7" fill="#333">34,0</text><path d="M1167.5 988V994" stroke="#000" stroke-width="1"/><text transform="translate(1167.1 1005) scale(0.85 1)" text-anchor="middle" font-family="Liberation Sans" font-size="8.7" fill="#333">36,0</text><path d="M1189.5 988V994" stroke="#000" stroke-width="1"/><text transform="translate(1189.1 1005) scale(0.85 1)" text-anchor="middle" font-family="Liberation Sans" font-size="8.7" fill="#333">38,0</text><path d="M1211.5 988V994" stroke="#000" stroke-width="1"/><text transform="translate(1211.0 1005) scale(0.85 1)" text-anchor="middle" font-family="Liberation Sans" font-size="8.7" fill="#333">40,0</text><path d="M1233.5 988V994" stroke="#000" stroke-width="1"/><text transform="translate(1233.0 1005) scale(0.85 1)" text-anchor="middle" font-family="Liberation Sans" font-size="8.7" fill="#333">42,0</text><path d="M1255.5 988V994" stroke="#000" stroke-width="1"/><text transform="translate(1255.0 1005) scale(0.85 1)" text-anchor="middle" font-family="Liberation Sans" font-size="8.7" fill="#333">44,0</text><path d="M1276.5 988V994" stroke="#000" stroke-width="1"/><text transform="translate(1277.0 1005) scale(0.85 1)" text-anchor="middle" font-family="Liberation Sans" font-size="8.7" fill="#333">46,0</text><path d="M1298.5 988V994" stroke="#000" stroke-width="1"/><text transform="translate(1299.0 1005) scale(0.85 1)" text-anchor="middle" font-family="Liberation Sans" font-size="8.7" fill="#333">48,0</text><path d="M1320.5 988V994" stroke="#000" stroke-width="1"/><text transform="translate(1320.9 1005) scale(0.85 1)" text-anchor="middle" font-family="Liberation Sans" font-size="8.7" fill="#333">50,0</text><path d="M1342.5 988V994" stroke="#000" stroke-width="1"/><text transform="translate(1342.9 1005) scale(0.85 1)" text-anchor="middle" font-family="Liberation Sans" font-size="8.7" fill="#333">52,0</text><path d="M1364.5 988V994" stroke="#000" stroke-width="1"/><text transform="translate(1364.9 1005) scale(0.85 1)" text-anchor="middle" font-family="Liberation Sans" font-size="8.7" fill="#333">54,0</text><path d="M1386.5 988V994" stroke="#000" stroke-width="1"/><text transform="translate(1386.9 1005) scale(0.85 1)" text-anchor="middle" font-family="Liberation Sans" font-size="8.7" fill="#333">56,0</text><path d="M1408.5 988V994" stroke="#000" stroke-width="1"/><text transform="translate(1408.9 1005) scale(0.85 1)" text-anchor="middle" font-family="Liberation Sans" font-size="8.7" fill="#333">58,0</text><path d="M1430.5 988V994" stroke="#000" stroke-width="1"/><text transform="translate(1430.9 1005) scale(0.85 1)" text-anchor="middle" font-family="Liberation Sans" font-size="8.7" fill="#333">60,0</text><path d="M1452.5 988V994" stroke="#000" stroke-width="1"/><text transform="translate(1452.8 1005) scale(0.85 1)" text-anchor="middle" font-family="Liberation Sans" font-size="8.7" fill="#333">62,0</text><path d="M1474.5 988V994" stroke="#000" stroke-width="1"/><text transform="translate(1474.8 1005) scale(0.85 1)" text-anchor="middle" font-family="Liberation Sans" font-size="8.7" fill="#333">64,0</text><path d="M1496.5 988V994" stroke="#000" stroke-width="1"/><text transform="translate(1496.8 1005) scale(0.85 1)" text-anchor="middle" font-family="Liberation Sans" font-size="8.7" fill="#333">66,0</text><path d="M1518.5 988V994" stroke="#000" stroke-width="1"/><text transform="translate(1518.8 1005) scale(0.85 1)" text-anchor="middle" font-family="Liberation Sans" font-size="8.7" fill="#333">68,0</text><path d="M1540.5 988V994" stroke="#000" stroke-width="1"/><text transform="translate(1540.8 1005) scale(0.85 1)" text-anchor="middle" font-family="Liberation Sans" font-size="8.7" fill="#333">70,0</text><path d="M1562.5 988V994" stroke="#000" stroke-width="1"/><text transform="translate(1562.8 1005) scale(0.85 1)" text-anchor="middle" font-family="Liberation Sans" font-size="8.7" fill="#333">72,0</text><path d="M1584.5 988V994" stroke="#000" stroke-width="1"/><text transform="translate(1584.7 1005) scale(0.85 1)" text-anchor="middle" font-family="Liberation Sans" font-size="8.7" fill="#333">74,0</text><path d="M1606.5 988V994" stroke="#000" stroke-width="1"/><text transform="translate(1606.7 1005) scale(0.85 1)" text-anchor="middle" font-family="Liberation Sans" font-size="8.7" fill="#333">76,0</text><path d="M1628.5 988V994" stroke="#000" stroke-width="1"/><text transform="translate(1628.7 1005) scale(0.85 1)" text-anchor="middle" font-family="Liberation Sans" font-size="8.7" fill="#333">78,0</text><path d="M1650.5 988V994" stroke="#000" stroke-width="1"/><text transform="translate(1650.7 1005) scale(0.85 1)" text-anchor="middle" font-family="Liberation Sans" font-size="8.7" fill="#333">80,0</text><path d="M1672.5 988V994" stroke="#000" stroke-width="1"/><text transform="translate(1672.7 1005) scale(0.85 1)" text-anchor="middle" font-family="Liberation Sans" font-size="8.7" fill="#333">82,0</text><path d="M1694.5 988V994" stroke="#000" stroke-width="1"/><text transform="translate(1694.6 1005) scale(0.85 1)" text-anchor="middle" font-family="Liberation Sans" font-size="8.7" fill="#333">84,0</text><path d="M1716.5 988V994" stroke="#000" stroke-width="1"/><text transform="translate(1716.6 1005) scale(0.85 1)" text-anchor="middle" font-family="Liberation Sans" font-size="8.7" fill="#333">86,0</text><path d="M1738.5 988V994" stroke="#000" stroke-width="1"/><text transform="translate(1738.6 1005) scale(0.85 1)" text-anchor="middle" font-family="Liberation Sans" font-size="8.7" fill="#333">88,0</text><path d="M1760.5 988V994" stroke="#000" stroke-width="1"/><text transform="translate(1760.6 1005) scale(0.85 1)" text-anchor="middle" font-family="Liberation Sans" font-size="8.7" fill="#333">90,0</text><path d="M1782.5 988V994" stroke="#000" stroke-width="1"/><text transform="translate(1782.6 1005) scale(0.85 1)" text-anchor="middle" font-family="Liberation Sans" font-size="8.7" fill="#333">92,0</text><path d="M1804.5 988V994" stroke="#000" stroke-width="1"/><text transform="translate(1804.6 1005) scale(0.85 1)" text-anchor="middle" font-family="Liberation Sans" font-size="8.7" fill="#333">94,0</text><path d="M1826.5 988V994" stroke="#000" stroke-width="1"/><text transform="translate(1826.5 1005) scale(0.85 1)" text-anchor="middle" font-family="Liberation Sans" font-size="8.7" fill="#333">96,0</text><path d="M1848.5 988V994" stroke="#000" stroke-width="1"/><text transform="translate(1848.5 1005) scale(0.85 1)" text-anchor="middle" font-family="Liberation Sans" font-size="8.7" fill="#333">98,0</text><path d="M1870.5 988V994" stroke="#000" stroke-width="1"/><text transform="translate(1870.5 1005) scale(0.85 1)" text-anchor="middle" font-family="Liberation Sans" font-size="8.7" fill="#333">100,0</text><path d="M1892.5 988V994" stroke="#000" stroke-width="1"/><text transform="translate(1892.5 1005) scale(0.85 1)" text-anchor="middle" font-family="Liberation Sans" font-size="8.7" fill="#333">102,0</text><text transform="translate(1905 1020) scale(0.92 1)" text-anchor="end" font-family="Liberation Sans" font-size="8.7" fill="#333">time [min]</text><polyline fill="none" stroke="#cc0010" stroke-width="1" points="771.4,970.5 774.7,938.4 785.7,855.9 796.7,800.7 807.7,763.4 818.7,737.7 829.7,719.6 840.6,706.4 851.6,696.6 862.6,688.9 873.6,682.7 884.6,677.5 895.6,672.9 906.6,668.8 917.6,665.1 928.6,661.6 939.6,658.3 950.6,655.1 961.5,652.1 972.5,649.2 983.5,646.4 994.5,643.7 1005.5,641.1 1016.5,638.6 1027.5,636.1 1038.5,633.7 1049.5,631.4 1060.5,629.1 1071.5,627.0 1082.4,624.8 1084.5,624.4 1790.5,970.5 1892.5,970.5"/><rect x="719.5" y="1026.5" width="13" height="13" fill="#f2c8c8" stroke="#c8001a" stroke-width="1.2"/></svg>
<div class="t " style="left:737px;top:1025px;color:#c8001a;font-size:11px;letter-spacing:0.2px">gas temperature</div>
</div></div></body></html>
